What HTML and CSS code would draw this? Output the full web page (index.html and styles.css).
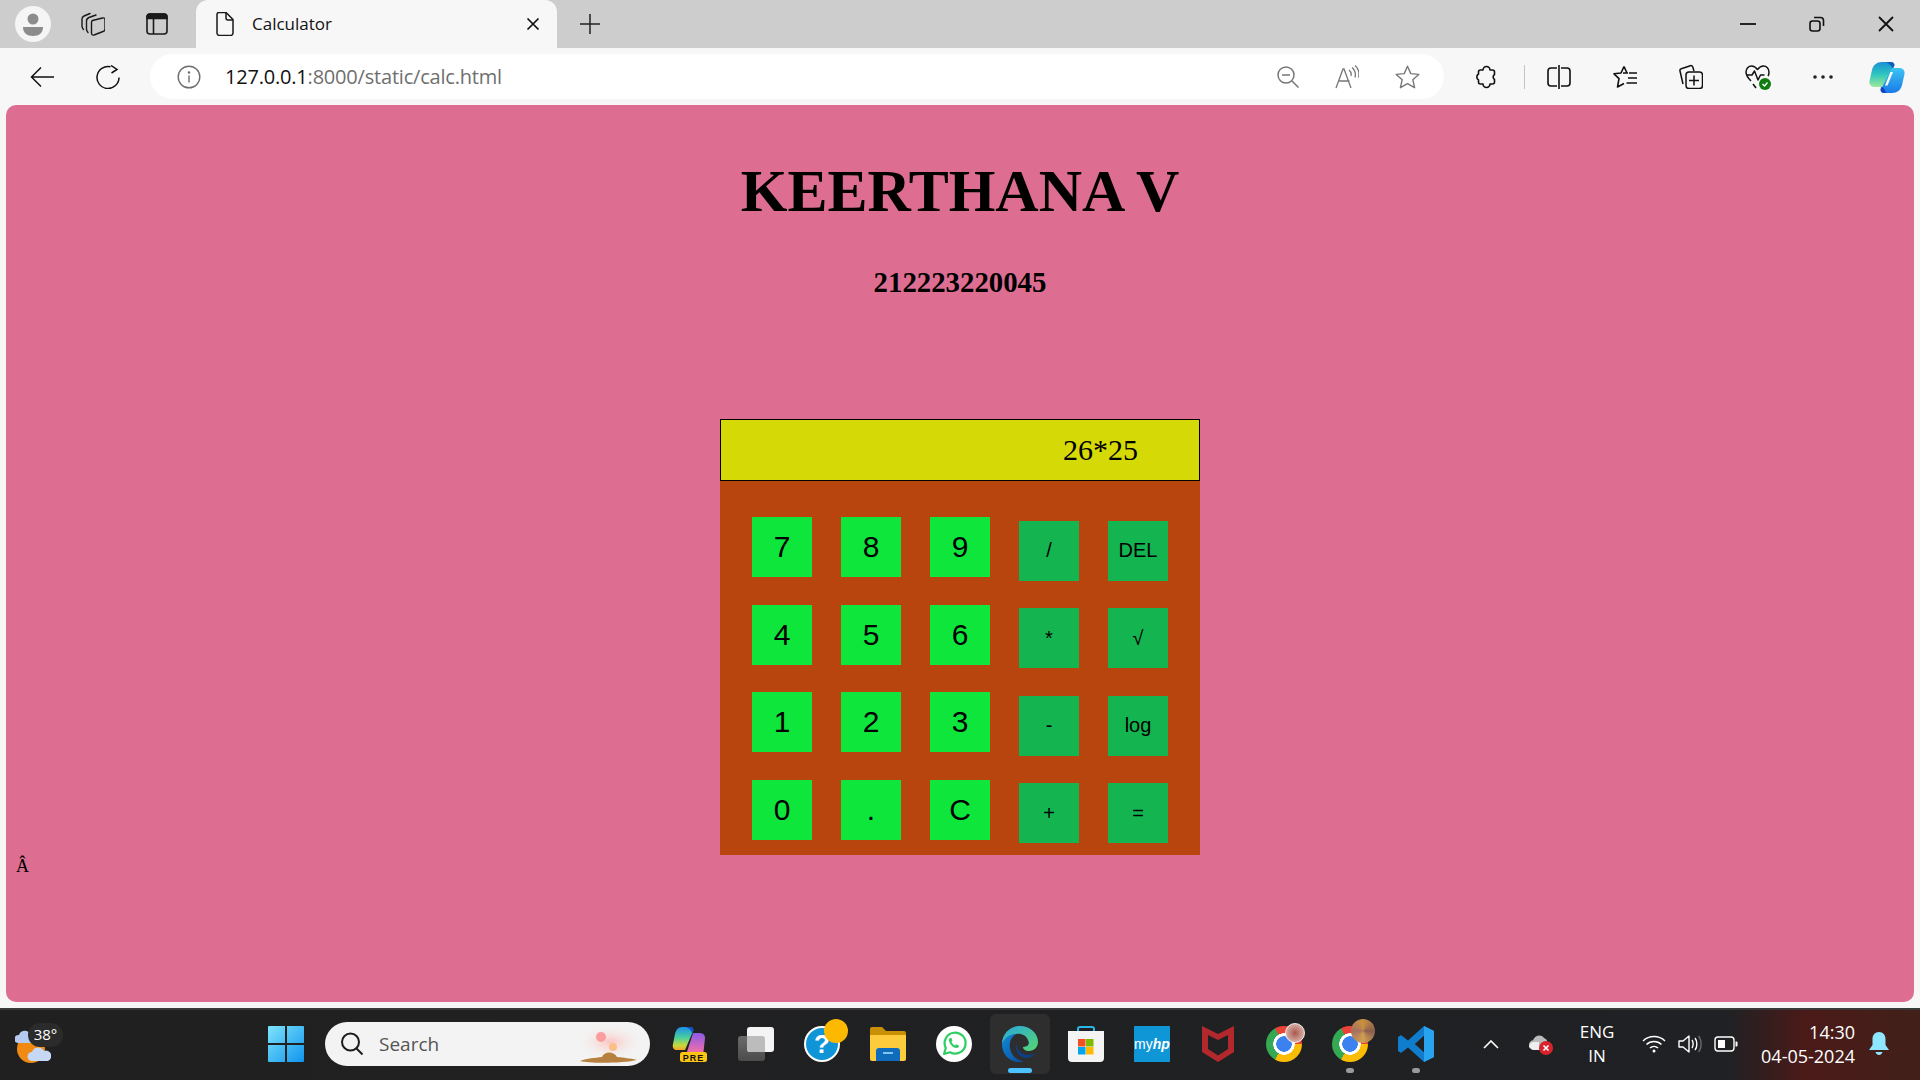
FILE: index.html
```html
<!DOCTYPE html>
<html>
    <head>
        <title>Calculator</title>
        <link rel="stylesheet" href="styles.css">
    </head>
    <body>
        <div id="tabstrip">
            <div class="profile">
                <svg width="36" height="36" viewBox="0 0 36 36"><circle cx="18" cy="13" r="5.5" fill="#8c8c8c"/><path d="M8 21h20c0 6-4 9-10 9s-10-3-10-9z" fill="#8c8c8c"/></svg>
            </div>
            <svg class="strip-icon first" width="24" height="24" viewBox="0 0 24 24" fill="none" stroke="#1a1a1a" stroke-width="1.4" stroke-linecap="round"><path d="M9 1.500L3 4Q1 5 1 7v7q0 2 1.500 3.500"/><path d="M15 3L8 5.500Q5.500 6.500 5.500 9v8q0 2 1.500 3.500"/><path d="M11.500 8.500L21.500 6Q24 5.500 24 8v9q0 2-2 2.500L13 23q-2.500.5-2.500-2V10.500q0-1.500 1-2z" stroke-linejoin="round"/></svg>
            <svg class="strip-icon second" width="24" height="24" viewBox="0 0 24 24" fill="none" stroke="#1a1a1a" stroke-width="1.600"><rect x="2" y="2" width="20" height="20" rx="3"/><path d="M2 6.500V5a3 3 0 0 1 3-3h14a3 3 0 0 1 3 3v1.500z" fill="#1a1a1a"/><path d="M8.500 6.500V22"/></svg>
            <div class="tab">
                <svg width="24" height="24" viewBox="0 0 24 24" fill="none" stroke="#1a1a1a" stroke-width="1.500" stroke-linejoin="round"><path d="M5 2.500a2 2 0 0 1 2-2h7l7 7v13.500a2.500 2.500 0 0 1-2.500 2.500h-11A2.500 2.500 0 0 1 5 21z" transform="translate(-1 0)"/><path d="M13 .5V6a2 2 0 0 0 2 2h5"/></svg>
                <span class="tab-title">Calculator</span>
                <svg class="tab-close" width="14" height="14" viewBox="0 0 14 14" stroke="#111" stroke-width="1.700"><path d="M1.500 1.500l11 11M12.500 1.500l-11 11"/></svg>
            </div>
            <svg class="new-tab" width="24" height="24" viewBox="0 0 24 24" stroke="#222" stroke-width="1.500"><path d="M12 2v20M2 12h20"/></svg>
            <div class="window-btns">
                <div class="window-btn"><svg width="16" height="16" viewBox="0 0 16 16" stroke="#111" stroke-width="1.800"><path d="M0 8h16"/></svg></div>
                <div class="window-btn"><svg width="16" height="16" viewBox="0 0 16 16" fill="none" stroke="#111" stroke-width="1.600"><rect x="1" y="5" width="10" height="10" rx="2.500"/><path d="M5 1.500h6.500a3 3 0 0 1 3 3V10"/></svg></div>
                <div class="window-btn"><svg width="16" height="16" viewBox="0 0 16 16" stroke="#111" stroke-width="1.800"><path d="M1 1l14 14M15 1L1 15"/></svg></div>
            </div>
        </div>

        <div id="toolbar">
            <svg class="tool" width="24" height="24" viewBox="0 0 24 24" fill="none" stroke="#111" stroke-width="1.500"><path d="M24 12H1.500M11 2.500L1.500 12l9.500 9.500"/></svg>
            <svg class="tool" width="24" height="24" viewBox="0 0 24 24" fill="none" stroke="#111" stroke-width="1.500"><path d="M14.500 1.800A11 11 0 1 0 23 12.500"/><path d="M14 .5l6 4-5.500 3.500" transform="translate(1 0)"/></svg>
            <div class="address">
                <svg width="24" height="24" viewBox="0 0 24 24" fill="none" stroke="#6e6e6e" stroke-width="1.400"><circle cx="12" cy="12" r="10.800"/><path d="M12 10.500v7"/><circle cx="12" cy="7.500" r=".6" fill="#6e6e6e"/></svg>
                <span class="url"><span class="url-host">127.0.0.1</span>:8000/static/calc.html</span>
                <div class="address-icons">
                    <svg width="22" height="22" viewBox="0 0 22 22" fill="none" stroke="#777" stroke-width="1.500"><circle cx="9" cy="9" r="8"/><path d="M5 9h8M15 15l6.500 6.500"/></svg>
                    <svg width="24" height="24" viewBox="0 0 24 24" fill="none" stroke="#777" stroke-width="1.300"><path d="M1 23L8 4h1l7 19M3.500 16h11"/><path d="M14 5c2 1.500 2.500 3.500 2 6M17 2.500c3 2.500 4 6 3 10M20 .5c4 3.500 4.500 8 3.500 12"/></svg>
                    <svg width="25" height="24" viewBox="0 0 25 24" fill="none" stroke="#777" stroke-width="1.400" stroke-linejoin="round"><path d="M12.500 1.200l3.300 7.400 8 .8-6 5.300 1.800 8-7.100-4.100-7.100 4.100 1.800-8-6-5.300 8-.8z"/></svg>
                </div>
            </div>
            <svg class="tool ext" width="24" height="24" viewBox="1 0 23 24" fill="none" stroke="#111" stroke-width="1.600" stroke-linejoin="round"><path d="M8.500 5a3.500 3.500 0 0 1 7 0h2.500a2 2 0 0 1 2 2v2.500a3 3 0 0 0 0 5V17a2 2 0 0 1-2 2h-2.500a3.500 3.500 0 0 1-7 0H6a2 2 0 0 1-2-2v-2a3.500 3.500 0 0 1 0-6V7a2 2 0 0 1 2-2z"/></svg>
            <div class="tool-sep"></div>
            <svg class="tool split" width="24" height="24" viewBox="0 0 24 24" fill="none" stroke="#111" stroke-width="1.600"><path d="M10 3H4a3 3 0 0 0-3 3v12a3 3 0 0 0 3 3h6M14 3h6a3 3 0 0 1 3 3v12a3 3 0 0 1-3 3h-6M12 0v24"/></svg>
            <svg class="tool" width="24" height="24" viewBox="0 0 24 24" fill="none" stroke="#111" stroke-width="1.600" stroke-linejoin="round"><path d="M11 1.500L14 8l-4 0 M14 8h1M11 1.500L8 8 1 8.800l5 4.800L4.500 22l6.500-3.500"/><path d="M16 8h8M15 13h9M13.500 18h10.500"/></svg>
            <svg class="tool" width="24" height="25" viewBox="0 0 24 25" fill="none" stroke="#111" stroke-width="1.500" stroke-linejoin="round"><path d="M4 20L1 7c-.3-1.200.3-2 1.300-2.300l9-3c1.200-.4 2 .2 2.500 1.300L15 7"/><rect x="7" y="8" width="16.500" height="16.500" rx="3" fill="#f7f7f7"/><path d="M15 11.500v10M10 16.500h10"/></svg>
            <svg class="tool" width="26" height="26" viewBox="0 0 26 26" fill="none" stroke="#111" stroke-width="1.500" stroke-linejoin="round"><path d="M6 17C3 14 1 12 1 8c0-3.500 2.500-6 5.500-6 2.500 0 4.500 1.500 6 3.500C14 3.500 16 2 18.500 2 21.500 2 24 4.500 24 8c0 1.500-.3 3-1 4"/><path d="M1.500 11H7l2.500-4 3.500 9 2.500-5h4"/><path d="M8 20l3 4"/><circle cx="20" cy="20" r="6" fill="#107c10" stroke="none"/><path d="M17.500 20l2 2 3-3.500" stroke="#fff" stroke-width="1.300"/></svg>
            <svg class="tool dots" width="24" height="24" viewBox="0 0 24 24" fill="#222"><circle cx="4" cy="12" r="1.800"/><circle cx="12" cy="12" r="1.800"/><circle cx="20" cy="12" r="1.800"/></svg>
            <svg class="tool copilot-btn" width="36" height="34" viewBox="0 0 36 34">
                <defs>
                    <linearGradient id="cp1" x1="0" y1="0" x2="0" y2="1"><stop offset="0" stop-color="#1a8fd8"/><stop offset=".5" stop-color="#2fc7bd"/><stop offset="1" stop-color="#a0e89a"/></linearGradient>
                    <linearGradient id="cp2" x1="0" y1="0" x2="0" y2="1"><stop offset="0" stop-color="#3cc4f2"/><stop offset="1" stop-color="#1a7ae8"/></linearGradient>
                </defs>
                <path d="M13 2h9c2 0 3 1 3.500 3L15 25c-.8 1.500-1.500 2-3.500 2H6c-4 0-6-2.500-5.500-6L3 10c1-5 5-8 10-8z" fill="url(#cp1)"/>
                <path d="M17 2h5c2 0 3 1 3.500 3L24 9c-1-2-3-5-7-7z" fill="#0f5fb8"/>
                <path d="M24 8h6c4 0 6 2.500 5.500 6L33 25c-1 5-5 8-10 8h-8c-2 0-3-1-3.500-3L22 10c.4-1 1-2 2-2z" fill="url(#cp2)"/>
                <path d="M12 27c3 0 4 3 5 6h-2c-2 0-3-1-3.500-3z" fill="#1a3fc8"/>
                <path d="M21.500 12l-5.500 13.500h2.500L24 12z" fill="#fff"/>
            </svg>
        </div>

        <div id="page">
            <div class="page-inner">
                <h1 class="name">KEERTHANA V</h1>
                <h2 class="regno">212223220045</h2>
                <div class="calc">
                    <div class="display">26*25</div>
                    <div class="keypad">
                        <div class="digits">
                            <button class="key">7</button>
                            <button class="key">8</button>
                            <button class="key">9</button>
                            <button class="key">4</button>
                            <button class="key">5</button>
                            <button class="key">6</button>
                            <button class="key">1</button>
                            <button class="key">2</button>
                            <button class="key">3</button>
                            <button class="key">0</button>
                            <button class="key">.</button>
                            <button class="key">C</button>
                        </div>
                        <div class="ops">
                            <button class="op">/</button>
                            <button class="op">DEL</button>
                            <button class="op">*</button>
                            <button class="op">√</button>
                            <button class="op">-</button>
                            <button class="op">log</button>
                            <button class="op">+</button>
                            <button class="op">=</button>
                        </div>
                    </div>
                </div>
                <div class="stray">Â</div>
            </div>
        </div>

        <div id="taskbar">
            <div class="weather">
                <svg width="36" height="42" viewBox="0 0 36 42">
                    <circle cx="16" cy="26" r="14" fill="#f08a12"/>
                    <path d="M3 20a4 4 0 0 1 1-8 6 6 0 0 1 11-1 4.500 4.500 0 0 1 2 9z" fill="#b4cbef"/>
                    <path d="M17 38a4.500 4.500 0 0 1 0-9 6.500 6.500 0 0 1 12-1 5 5 0 0 1 4 10z" fill="#c6d8f4"/>
                </svg>
                <span class="temp">38°</span>
            </div>
            <svg class="start" width="36" height="36" viewBox="0 0 36 36">
                <defs><linearGradient id="win" x1="0" y1="0" x2="1" y2="1"><stop offset="0" stop-color="#7ee4fb"/><stop offset="1" stop-color="#0f94ee"/></linearGradient></defs>
                <path d="M1 0h16v17H0V1a1 1 0 0 1 1-1zM19 0h16a1 1 0 0 1 1 1v16H19zM0 19h17v17H1a1 1 0 0 1-1-1zM19 19h17v16a1 1 0 0 1-1 1H19z" fill="url(#win)"/>
            </svg>
            <div class="search">
                <svg width="24" height="24" viewBox="0 0 24 24" fill="none" stroke="#1c1c1c" stroke-width="2"><circle cx="10.500" cy="10" r="8.500"/><path d="M16.500 16.500l6 6"/></svg>
                <span class="search-text">Search</span>
                <svg class="search-art" width="70" height="44" viewBox="0 0 70 44">
                    <defs><radialGradient id="glow"><stop offset="0" stop-color="#fbc4c0"/><stop offset="1" stop-color="#f3f3f3" stop-opacity="0"/></radialGradient></defs>
                    <ellipse cx="38" cy="20" rx="34" ry="18" fill="url(#glow)"/>
                    <circle cx="29" cy="15" r="5" fill="#fb9d9d"/>
                    <circle cx="41" cy="25" r="4" fill="#fbbf8a"/>
                    <path d="M8 39c8-3 14-3 22-4 2-6 12-6 15 0 8 1 12 1 20 3-12 3-46 4-57 1z" fill="#b8803f"/>
                </svg>
            </div>
            <div class="apps">
                <div class="app">
                    <svg width="36" height="36" viewBox="0 0 36 36">
                        <defs>
                            <linearGradient id="cpa" x1="0" y1="0" x2="0" y2="1"><stop offset="0" stop-color="#1f8fe8"/><stop offset=".45" stop-color="#45cfa0"/><stop offset=".8" stop-color="#c8d83a"/><stop offset="1" stop-color="#f4a32e"/></linearGradient>
                            <linearGradient id="cpb" x1="0" y1="0" x2="0" y2="1"><stop offset="0" stop-color="#8a5ae8"/><stop offset="1" stop-color="#f070a8"/></linearGradient>
                        </defs>
                        <path d="M10 1h8c2 0 3 1 3.500 3L13 24H5c-3 0-5-2-4-6L3 8c1-4 3-7 7-7z" fill="url(#cpa)"/>
                        <path d="M14 1h4c2 0 3 1 3.500 3L20 7c-1-3-3-5-6-6z" fill="#1050c8"/>
                        <path d="M21 7h7c4 0 5 3 5 5l-1.500 14H15z" fill="url(#cpb)"/>
                        <rect x="8" y="26" width="27" height="10" rx="2.500" fill="#fdc513"/>
                        <text x="21.500" y="34.500" class="pre-text">PRE</text>
                    </svg>
                </div>
                <div class="app">
                    <svg width="36" height="36" viewBox="0 0 36 36">
                        <defs><linearGradient id="tv" x1="0" y1="0" x2="0" y2="1"><stop offset="0" stop-color="#6a6a6a"/><stop offset="1" stop-color="#4c4c4c"/></linearGradient></defs>
                        <rect x="0" y="10" width="27" height="25" rx="3" fill="url(#tv)"/>
                        <rect x="9" y="1" width="27" height="25" rx="3" fill="#f4f4f4"/>
                        <path d="M9 10h15a3 3 0 0 1 3 3v13H12a3 3 0 0 1-3-3z" fill="#bcbcbc"/>
                    </svg>
                </div>
                <div class="app">
                    <div class="help">?</div>
                    <div class="help-dot"></div>
                </div>
                <div class="app">
                    <svg width="36" height="34" viewBox="0 0 36 34">
                        <path d="M0 2a2 2 0 0 1 2-2h10l4 4h18a2 2 0 0 1 2 2v6H0z" fill="#c99006"/>
                        <path d="M0 8h36v24a2 2 0 0 1-2 2H2a2 2 0 0 1-2-2z" fill="#fdcb3c"/>
                        <path d="M6 34V24a3 3 0 0 1 3-3h18a3 3 0 0 1 3 3v10z" fill="#0f6cbd"/>
                        <rect x="13" y="25" width="10" height="2" fill="#7fc4ee"/>
                    </svg>
                </div>
                <div class="app">
                    <svg width="36" height="36" viewBox="0 0 36 36">
                        <circle cx="18" cy="18" r="18" fill="#fff"/>
                        <path d="M8 28l1.800-6A10.500 10.500 0 1 1 14 26.300z" fill="none" stroke="#2fce62" stroke-width="2.200" stroke-linejoin="round"/>
                        <path d="M14 12c-1.500 1-1.500 3 0 5.500s4 4.500 6.500 4.500c1.500 0 2.500-1 2.500-2.300l-2.800-1.500-1.200 1.200c-1.500-.5-3-2-3.500-3.600l1-1.200-1.200-2.800z" fill="#2fce62"/>
                    </svg>
                </div>
                <div class="app active">
                    <svg width="36" height="36" viewBox="0 0 36 36">
                        <defs>
                            <linearGradient id="edge1" x1="0" y1="0" x2="1" y2="1"><stop offset="0" stop-color="#2aa8e0"/><stop offset="1" stop-color="#55d66e"/></linearGradient>
                            <linearGradient id="edge2" x1="0" y1="0" x2="1" y2="1"><stop offset="0" stop-color="#0f8bd8"/><stop offset="1" stop-color="#0b4a9e"/></linearGradient>
                        </defs>
                        <path d="M18 0c10 0 18 7 18 16 0 5-4 9-9 9-4 0-6-2-6-4 5 0 7-3 5-7C24 9 19 7 14 8 8 9 3 13 0 18 0 8 8 0 18 0z" fill="url(#edge1)"/>
                        <path d="M0 18c2-6 8-10 14-10-5 3-7 8-6 14 1 7 7 13 14 13-2 1-3 1-5 1C7 36 0 28 0 18z" fill="url(#edge2)"/>
                        <path d="M15 17c-3 6 1 15 10 15 3 0 6-2 8-5-2 1-4 2-7 2-6-.2-12-5-11-12z" fill="#0c3f86"/>
                    </svg>
                    <div class="active-bar"></div>
                </div>
                <div class="app">
                    <svg width="36" height="36" viewBox="0 0 36 36">
                        <path d="M10 6V3a2 2 0 0 1 2-2h12a2 2 0 0 1 2 2v3" fill="none" stroke="#2ab4e8" stroke-width="2"/>
                        <path d="M0 5h36v27a4 4 0 0 1-4 4H4a4 4 0 0 1-4-4z" fill="#f4f4f4"/>
                        <rect x="10" y="13" width="7.500" height="7.500" fill="#f25022"/>
                        <rect x="18" y="13" width="7.500" height="7.500" fill="#7fba00"/>
                        <rect x="10" y="21" width="7.500" height="7.500" fill="#00a4ef"/>
                        <rect x="18" y="21" width="7.500" height="7.500" fill="#ffb900"/>
                    </svg>
                </div>
                <div class="app">
                    <div class="myhp">my<i>hp</i></div>
                </div>
                <div class="app">
                    <svg width="32" height="36" viewBox="0 0 32 36"><path fill-rule="evenodd" d="M0 0l16 8 16-8v26L16 36 0 26zM6 9v14l10 6.500L26 23V9l-10 5z" fill="#b3282d"/></svg>
                </div>
                <div class="app">
                    <div class="chrome"></div>
                    <div class="avatar small"></div>
                </div>
                <div class="app">
                    <div class="chrome"></div>
                    <div class="avatar big"></div>
                    <div class="run-dot"></div>
                </div>
                <div class="app">
                    <svg width="36" height="36" viewBox="0 0 36 36">
                        <path d="M26 0l10 5v26l-10 5-16-14.500L3 27l-3-2V11l3-2 7 5.500zM26 10l-9 8 9 8z" fill="#0f7dcc" fill-rule="evenodd"/>
                        <path d="M26 0l10 5v26l-10 5z" fill="#2aa3ee"/>
                        <path d="M26 10l-9 8 9 8z" fill="#202020"/>
                    </svg>
                    <div class="run-dot"></div>
                </div>
            </div>
            <div class="tray">
                <svg class="chevron" width="16" height="9" viewBox="0 0 16 9" fill="none" stroke="#fff" stroke-width="1.600"><path d="M1 8l7-7 7 7"/></svg>
                <svg class="cloud" width="25" height="22" viewBox="0 0 25 22">
                    <path d="M5 17a5 5 0 0 1 0-9.800C7 2 13 1 16 5a5 5 0 0 1 3 6v6z" fill="#bbb"/>
                    <path d="M1 14a5 5 0 0 1 5-5h5v8H5z" fill="#eee"/>
                    <circle cx="18" cy="15" r="7" fill="#d8232e"/>
                    <path d="M15.500 12.500l5 5M20.500 12.500l-5 5" stroke="#fff" stroke-width="1.600"/>
                </svg>
                <div class="lang"><span>ENG</span><span>IN</span></div>
                <svg class="tray-icon" width="24" height="18" viewBox="0 0 24 18" fill="none" stroke="#fff" stroke-width="1.500"><path d="M1 6a16 16 0 0 1 22 0M4.500 9.500a11 11 0 0 1 15 0M8 13a6 6 0 0 1 8 0"/><circle cx="12" cy="16" r="1.500" fill="#fff" stroke="none"/></svg>
                <svg class="tray-icon" width="24" height="20" viewBox="0 0 24 20" fill="none" stroke="#fff" stroke-width="1.400" stroke-linejoin="round"><path d="M1 7h4l6-5v16l-6-5H1z"/><path d="M14 6c1.500 2 1.500 6 0 8M17 4c2.500 3 2.500 9 0 12"/><path d="M20.500 2c3.500 4 3.500 12 0 16" stroke="#666"/></svg>
                <svg class="tray-icon" width="24" height="16" viewBox="0 0 24 16" fill="none"><rect x="1" y="1" width="19" height="14" rx="3" stroke="#fff" stroke-width="1.400"/><rect x="4" y="4" width="7" height="8" fill="#fff"/><path d="M21.500 5.500h1a1 1 0 0 1 1 1v3a1 1 0 0 1-1 1h-1z" fill="#fff"/></svg>
                <div class="clock"><span>14:30</span><span>04-05-2024</span></div>
                <svg class="bell" width="20" height="24" viewBox="0 0 20 24" fill="#8fe6ff"><path d="M10 0c4 0 6.500 3 6.500 7v6l3.500 5H0l3.500-5V7C3.500 3 6 0 10 0z"/><path d="M6.500 20h7c-.5 2-2 3-3.500 3s-3-1-3.500-3z"/></svg>
            </div>
        </div>
    </body>
</html>
```

FILE: styles.css
```css
body {
    font-family: "Open Sans", "Noto Sans", sans-serif;
    margin: 0;
    padding: 0;
    width: 1920px;
    height: 1080px;
    overflow: hidden;
    display: flex;
    flex-direction: column;
    background-color: #f7f7f7;
}

svg {
    display: block;
    flex: none;
}

/* browser tab row */
#tabstrip {
    height: 48px;
    flex: none;
    display: flex;
    align-items: center;
    background-color: #cdcdcd;
    padding-left: 15px;
}

.profile {
    width: 36px;
    height: 36px;
    border-radius: 50%;
    background-color: #f5f5f5;
}

.strip-icon.first {
    margin-left: 30px;
}

.strip-icon.second {
    margin-left: 40px;
}

.tab {
    position: relative;
    width: 361px;
    height: 48px;
    margin-left: 27px;
    box-sizing: border-box;
    padding-left: 17px;
    display: flex;
    align-items: center;
    background-color: #f7f7f7;
    border-radius: 12px 12px 0 0;
}

.tab-title {
    margin-left: 15px;
    margin-bottom: 2px;
    font-size: 17px;
    color: #111;
}

.tab-close {
    margin-left: auto;
    margin-right: 17px;
}

.new-tab {
    margin-left: 21px;
}

.window-btns {
    display: flex;
    margin-left: auto;
}

.window-btn {
    width: 69px;
    height: 48px;
    display: flex;
    align-items: center;
    justify-content: center;
}

/* address bar row */
#toolbar {
    height: 57px;
    flex: none;
    display: flex;
    align-items: center;
    gap: 42px;
    padding-left: 30px;
    background-color: #f7f7f7;
}

.address {
    width: 1294px;
    height: 45px;
    margin-left: -12px;
    box-sizing: border-box;
    padding: 0 24px 0 27px;
    display: flex;
    align-items: center;
    background-color: #fff;
    border-radius: 23px;
}

.url {
    margin-left: 24px;
    font-size: 20px;
    letter-spacing: -.2px;
    color: #6f6f6f;
}

.url-host {
    color: #111;
}

.address-icons {
    margin-left: auto;
    display: flex;
    align-items: center;
    gap: 36px;
}

.tool.ext {
    margin-left: -11px;
}

.tool-sep {
    width: 1px;
    height: 24px;
    margin: 0 -20px 0 -17px;
    background-color: #c4c4c4;
}

.tool.dots {
    margin-left: -2px;
}

.tool.copilot-btn {
    margin-left: -8px;
}

/* the calculator page */
#page {
    height: 897px;
    flex: none;
    margin: 0 6px;
    background-color: #dd6e92;
    border-radius: 10px;
}

.page-inner {
    padding: 8px;
    text-align: center;
}

.name {
    margin: 44px 0 0;
    font-family: "Liberation Serif", serif;
    font-size: 60px;
    line-height: 69px;
}

.regno {
    margin: 40px 0 0;
    font-family: "Liberation Serif", serif;
    font-size: 28.800px;
    line-height: 33px;
}

.calc {
    width: 480px;
    margin: 120px auto 0;
}

.display {
    height: 62px;
    box-sizing: border-box;
    border: 1px solid #000;
    padding-right: 61px;
    background-color: #d5da06;
    font-family: "Liberation Serif", serif;
    font-size: 30px;
    line-height: 60px;
    text-align: right;
}

.keypad {
    height: 374px;
    box-sizing: border-box;
    display: flex;
    gap: 29px;
    padding: 36px 0 0 32px;
    background-color: #b8450e;
}

.digits,
.ops {
    display: grid;
    grid-auto-rows: 60px;
    column-gap: 29px;
    row-gap: 27.500px;
    align-content: start;
}

.digits {
    grid-template-columns: repeat(3, 60px);
}

.ops {
    grid-template-columns: repeat(2, 60px);
    margin-top: 3.900px;
}

.key,
.op {
    padding: 0;
    border: none;
    color: #000;
    font-family: "Liberation Sans", sans-serif;
}

.key {
    background-color: #0ee63c;
    font-size: 30px;
}

.op {
    background-color: #14b551;
    font-size: 20px;
}

.stray {
    margin-top: 1px;
    font-family: "Liberation Serif", serif;
    font-size: 18px;
    line-height: 21px;
    text-align: left;
    padding-left: 2px;
}

/* windows taskbar */
#taskbar {
    height: 72px;
    margin-top: 6px;
    flex: none;
    display: flex;
    align-items: center;
    border-top: 2px solid #3a3a3a;
    padding-bottom: 2px;
    box-sizing: border-box;
    background: linear-gradient(90deg, #202020 0%, #202124 90%, #4a1a18 94%, #42201a 100%);
}

.weather {
    position: relative;
    width: 48px;
    height: 42px;
    margin-left: 15px;
}

.temp {
    position: absolute;
    top: 0;
    right: 0;
    width: 35px;
    height: 24px;
    border-radius: 12px;
    background-color: #2b2b2b;
    color: #fff;
    font-size: 15px;
    line-height: 22px;
    text-align: center;
}

.start {
    margin-left: 205px;
}

.search {
    position: relative;
    width: 325px;
    height: 44px;
    margin-left: 21px;
    box-sizing: border-box;
    padding-left: 15px;
    display: flex;
    align-items: center;
    background-color: #f3f3f3;
    border-radius: 22px;
}

.search-text {
    margin-left: 15px;
    font-size: 19px;
    color: #555;
}

.search-art {
    position: absolute;
    right: 8px;
    top: 0;
}

.apps {
    display: flex;
    margin-left: 7px;
}

.app {
    position: relative;
    width: 66px;
    height: 60px;
    display: flex;
    align-items: center;
    justify-content: center;
}

.app.active::before {
    content: "";
    position: absolute;
    left: 3px;
    right: 3px;
    top: 0;
    bottom: 0;
    background-color: #2e2e2e;
    border-radius: 6px;
}

.app.active svg {
    position: relative;
}

.active-bar {
    position: absolute;
    left: 21px;
    bottom: 1px;
    width: 24px;
    height: 5px;
    border-radius: 3px;
    background-color: #4cc2ff;
}

.run-dot {
    position: absolute;
    left: 29px;
    bottom: 1px;
    width: 8px;
    height: 5px;
    border-radius: 3px;
    background-color: #9a9a9a;
}

.pre-text {
    font-family: "Liberation Sans", sans-serif;
    font-size: 9px;
    font-weight: bold;
    letter-spacing: 1px;
    text-anchor: middle;
    fill: #111;
}

.help {
    width: 32px;
    height: 32px;
    border: 2px solid #fff;
    border-radius: 50%;
    background-color: #0f94d8;
    color: #fff;
    font-family: "Liberation Sans", sans-serif;
    font-size: 26px;
    font-weight: bold;
    line-height: 32px;
    text-align: center;
}

.help-dot {
    position: absolute;
    left: 35px;
    top: 5px;
    width: 24px;
    height: 24px;
    border-radius: 50%;
    background-color: #fdb900;
}

.myhp {
    width: 36px;
    height: 36px;
    background-color: #0f96d6;
    color: #fff;
    font-family: "Liberation Sans", sans-serif;
    font-size: 14px;
    line-height: 36px;
    text-align: center;
}

.myhp i {
    font-weight: bold;
}

.chrome {
    width: 36px;
    height: 36px;
    border-radius: 50%;
    background: radial-gradient(circle, #3b82f0 0 7.500px, #fff 8px 10.500px, transparent 11px),
        conic-gradient(from -30deg, #ea4335 0 120deg, #fbbc04 120deg 240deg, #34a853 240deg 360deg);
}

.avatar {
    position: absolute;
    border-radius: 50%;
}

.avatar.small {
    left: 34px;
    top: 9px;
    width: 18px;
    height: 18px;
    border: 1px solid #eee;
    background: radial-gradient(circle, #a8574e, #e9d0c5);
}

.avatar.big {
    left: 34px;
    top: 5px;
    width: 24px;
    height: 24px;
    background: conic-gradient(#c9913f, #8a5c50, #d0a050, #a77060, #c9913f);
}

.tray {
    flex: 1;
    display: flex;
    align-items: center;
    margin-left: 26px;
    color: #fff;
}

.chevron {
    margin-left: 8px;
}

.cloud {
    margin-left: 29px;
}

.lang {
    margin-left: 26px;
    width: 36px;
    display: flex;
    flex-direction: column;
    align-items: center;
    font-size: 17px;
    line-height: 24px;
}

.tray-icon {
    margin-left: 12px;
}

.lang + .tray-icon {
    margin-left: 27px;
}

.clock {
    margin-left: 24px;
    width: 93px;
    display: flex;
    flex-direction: column;
    align-items: flex-end;
    font-size: 18px;
    line-height: 24px;
    white-space: nowrap;
}

.bell {
    margin-left: 14px;
}
```
